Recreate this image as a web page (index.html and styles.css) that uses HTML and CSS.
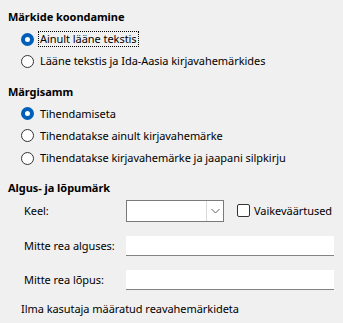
FILE: index.html
```html
<!DOCTYPE html>
<html>
<head>
<meta charset="utf-8">
<link rel="stylesheet" href="styles.css">
</head>
<body>
<div class="page">
  <div class="heading h1">Märkide koondamine</div>
  <div class="radio-row"><span class="radio checked"></span><span class="label focused">Ainult lääne tekstis</span></div>
  <div class="radio-row"><span class="radio"></span><span class="label">Lääne tekstis ja Ida-Aasia kirjavahemärkides</span></div>

  <div class="heading h2">Märgisamm</div>
  <div class="radio-row"><span class="radio checked"></span><span class="label">Tihendamiseta</span></div>
  <div class="radio-row"><span class="radio"></span><span class="label">Tihendatakse ainult kirjavahemärke</span></div>
  <div class="radio-row"><span class="radio"></span><span class="label">Tihendatakse kirjavahemärke ja jaapani silpkirju</span></div>

  <div class="heading h3">Algus- ja lõpumärk</div>
  <div class="form-row keel-row">
    <span class="flabel">Keel:</span>
    <div class="select">
      <div class="select-value"></div>
      <div class="select-btn">
        <svg width="9" height="6" viewBox="0 0 9 6"><path d="M0.5 1 L4.5 5 L8.5 1" fill="none" stroke="#606060" stroke-width="1"/></svg>
      </div>
    </div>
    <span class="checkbox"></span>
    <span class="cblabel">Vaikeväärtused</span>
  </div>
  <div class="form-row input-row first">
    <span class="flabel">Mitte rea alguses:</span>
    <div class="input"></div>
  </div>
  <div class="form-row input-row">
    <span class="flabel">Mitte rea lõpus:</span>
    <div class="input"></div>
  </div>
  <div class="note">Ilma kasutaja määratud reavahemärkideta</div>
</div>
</body>
</html>
```
FILE: styles.css
```css
html, body {
  margin: 0;
  padding: 0;
  background: #f0f0f0;
}
body {
  font-family: "Noto Sans", "Open Sans", sans-serif;
  font-size: 11px;
  letter-spacing: -0.05px;
  color: #000;
  width: 343px;
  height: 323px;
  overflow: hidden;
}
.page {
  display: flex;
  flex-direction: column;
  padding: 6px 0 0 8px;
}
.heading {
  font-weight: bold;
  height: 22px;
  line-height: 22px;
}
.h2 { margin-top: 8px; }
.h3 { margin-top: 7px; }
.radio-row {
  display: flex;
  align-items: center;
  height: 22px;
  padding-left: 13px;
}
.radio-row + .radio-row { height: 22.5px; }
.radio {
  width: 11px;
  height: 11px;
  border: 1px solid #333;
  border-radius: 50%;
  box-sizing: content-box;
  background: #fff;
  margin-right: 4px;
  flex: none;
}
.radio.checked {
  width: 5px;
  height: 5px;
  border: 4px solid #005fb8;
  background: #fff;
}
.label {
  line-height: 14px;
  padding: 0 1px;
  border: 1px dotted transparent;
}
.label.focused {
  border-color: #000;
}
.form-row {
  display: flex;
  align-items: center;
  padding-left: 16px;
}
.flabel {
  width: 102px;
  flex: none;
}
.keel-row {
  height: 22px;
  margin-top: 1px;
}
.select {
  width: 96px;
  height: 20px;
  border: 1px solid #7a7a7a;
  background: #fff;
  display: flex;
}
.select-value { flex: 1; }
.select-btn {
  width: 16px;
  border-left: 1px solid #d9d9d9;
  display: flex;
  align-items: center;
  justify-content: center;
}
.checkbox {
  width: 11px;
  height: 11px;
  border: 1px solid #333;
  border-radius: 2px;
  background: #fff;
  margin-left: 13px;
  margin-right: 4px;
  flex: none;
}
.input-row {
  height: 20px;
}
.input-row.first { margin-top: 14px; }
.input-row + .input-row { margin-top: 14px; }
.input {
  width: 208px;
  height: 19px;
  background: #fff;
  border-bottom: 1px solid #838383;
}
.note {
  padding-left: 13px;
  height: 22px;
  line-height: 22px;
  margin-top: 8px;
}
```
